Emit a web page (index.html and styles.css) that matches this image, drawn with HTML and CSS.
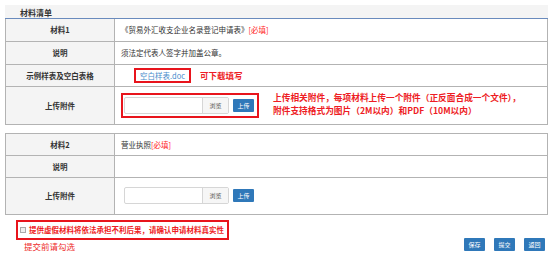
FILE: index.html
```html
<!DOCTYPE html>
<html lang="zh-CN">
<head>
<meta charset="utf-8">
<title>材料清单</title>
<link rel="stylesheet" href="styles.css">
</head>
<body>
<div class="page">
  <div class="section-title">材料清单</div>
  <table class="mat first">
    <tr class="h22">
      <td class="label">材料1</td>
      <td class="val">《贸易外汇收支企业名录登记申请表》<span class="req">[必填]</span></td>
    </tr>
    <tr class="h23">
      <td class="label">说明</td>
      <td class="val">须法定代表人签字并加盖公章。</td>
    </tr>
    <tr class="h22">
      <td class="label">示例样表及空白表格</td>
      <td class="val">
        <div class="sample">
          <span class="link-box"><a class="link" href="#">空白样表.doc</a></span>
          <span class="hint">可下载填写</span>
        </div>
      </td>
    </tr>
    <tr class="h38">
      <td class="label">上传附件</td>
      <td class="val">
        <div class="upload-row">
          <div class="upload-box hl">
            <div class="file"><span class="file-input"></span><span class="browse">浏览</span></div>
            <span class="btn small">上传</span>
          </div>
          <div class="note">
            <div class="note-line">上传相关附件，每项材料上传一个附件（正反面合成一个文件），</div>
            <div class="note-line">附件支持格式为图片（2M以内）和PDF（10M以内）</div>
          </div>
        </div>
      </td>
    </tr>
  </table>

  <table class="mat second">
    <tr class="h22">
      <td class="label">材料2</td>
      <td class="val">营业执照<span class="req">[必填]</span></td>
    </tr>
    <tr class="h22">
      <td class="label">说明</td>
      <td class="val"></td>
    </tr>
    <tr class="h37">
      <td class="label">上传附件</td>
      <td class="val">
        <div class="upload-box plain">
          <div class="file"><span class="file-input"></span><span class="browse">浏览</span></div>
          <span class="btn small">上传</span>
        </div>
      </td>
    </tr>
  </table>

  <div class="footer">
    <div class="confirm">
      <label class="confirm-box"><span class="chk"></span>提供虚假材料将依法承担不利后果，请确认申请材料真实性</label>
      <div class="confirm-note">提交前请勾选</div>
    </div>
    <div class="actions">
      <span class="btn act">保存</span>
      <span class="btn act">提交</span>
      <span class="btn act">返回</span>
    </div>
  </div>
</div>
</body>
</html>
```
FILE: styles.css
```css
* { box-sizing: border-box; }
body {
  margin: 0;
  background: #fff;
  font-family: "Noto Sans CJK SC", "Liberation Sans", sans-serif;
  color: #333;
}
.page {
  padding: 5px 5px 0 5px;
  width: 553px;
}
.section-title {
  height: 14px;
  background: #f4f4f4;
  border-bottom: 1px solid #6a8bbd;
  font-size: 8px;
  font-weight: bold;
  color: #333;
  padding: 2px 0 0 15px;
  line-height: 11px;
}
.mat {
  border-collapse: collapse;
  width: 543px;
  table-layout: fixed;
}
.mat.second { margin-top: 8px; }
.mat td {
  border: 1px solid #b3b3b3;
  font-size: 7.5px;
  color: #333;
  padding: 0 6px;
  vertical-align: middle;
}
.mat.first tr:first-child td { border-top: none; }
.mat td.label {
  width: 109px;
  background: #f4f4f4;
  text-align: center;
  font-weight: bold;
  padding: 0;
}
.h22 td { height: 22px; }
.h23 td { height: 23px; }
.h37 td { height: 37px; }
.h38 td { height: 38px; }
.req { color: #f22; }
.sample {
  display: flex;
  align-items: center;
  padding-left: 13px;
}
.link-box {
  border: 2px solid #e8141c;
  height: 15px;
  width: 57px;
  display: flex;
  align-items: center;
  justify-content: center;
}
.link {
  color: #4a8ccc;
  text-decoration: none;
  font-size: 7.5px;
}
.hint {
  margin-left: 9px;
  color: #ee1c24;
  font-size: 8.5px;
  font-weight: bold;
}
.upload-row {
  display: flex;
  align-items: center;
}
.upload-box {
  display: flex;
  align-items: center;
}
.upload-box.hl {
  border: 2px solid #e8141c;
  width: 138px;
  height: 25px;
  padding-left: 1px;
}
.upload-box.plain { padding-left: 3px; }
.file {
  display: flex;
  width: 105px;
  height: 17px;
  border: 1px solid #d6d6d6;
  border-radius: 2px;
  background: #fff;
}
.file-input { flex: 1; }
.browse {
  width: 26px;
  border-left: 1px solid #d6d6d6;
  background: #f6f6f6;
  font-size: 6px;
  color: #555;
  display: flex;
  align-items: center;
  justify-content: center;
}
.btn {
  display: inline-flex;
  align-items: center;
  justify-content: center;
  background: #2f78b9;
  color: #fff;
  font-size: 6px;
  border-radius: 1px;
}
.btn.small {
  width: 21px;
  height: 13px;
  margin-left: 4px;
}
.note {
  margin-left: 14px;
  color: #ee1c24;
  font-size: 8.7px;
  font-weight: bold;
  white-space: nowrap;
}
.note-line {
  line-height: 12.7px;
}
.footer {
  display: flex;
  justify-content: space-between;
  align-items: flex-start;
  padding-right: 3px;
}
.confirm {
  margin-left: 11px;
  margin-top: 5px;
}
.confirm-box {
  display: flex;
  align-items: center;
  width: 213px;
  height: 20px;
  border: 2px solid #e8141c;
  color: #ee1c24;
  font-size: 7.5px;
  font-weight: bold;
  padding-left: 2px;
}
.chk {
  width: 6px;
  height: 6px;
  border: 1px solid #aaa;
  background: #eee;
  margin-right: 3px;
}
.confirm-note {
  margin-top: 1px;
  margin-left: 8px;
  color: #ee2a2a;
  font-size: 8.5px;
  line-height: 11px;
}
.actions {
  display: flex;
  gap: 9px;
  margin-top: 23px;
}
.btn.act {
  width: 21px;
  height: 13px;
}
```
